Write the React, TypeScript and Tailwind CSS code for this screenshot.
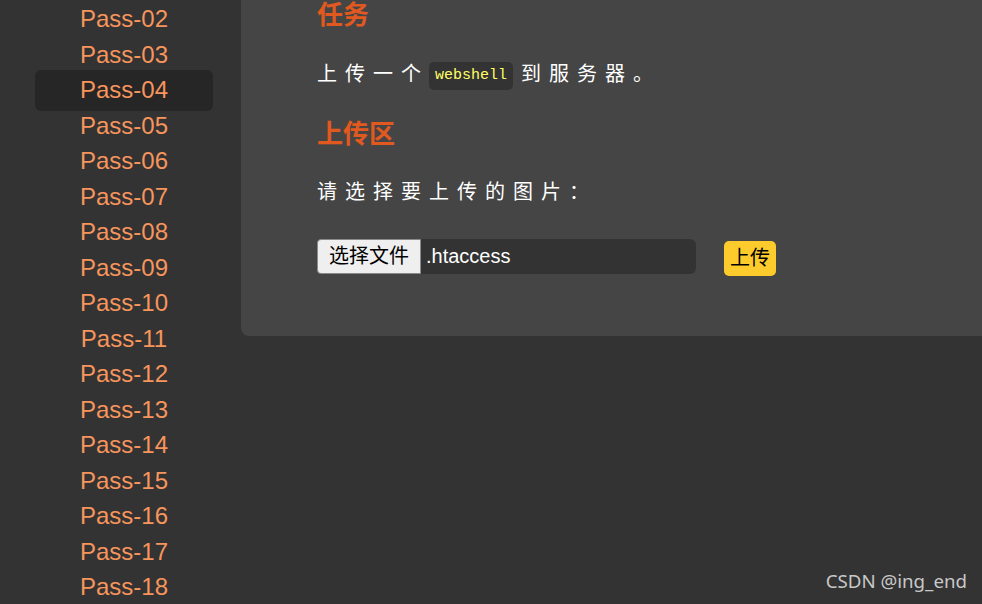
import React from 'react';

const passes = Array.from({ length: 17 }, (_, i) => `Pass-${String(i + 2).padStart(2, '0')}`);

const cjk = "font-['Liberation_Sans','Noto_Sans_CJK_SC',sans-serif]";

export default function App() {
  return (
    <div className="relative flex h-[604px] w-full overflow-hidden bg-[#333333]">
      <aside className="w-[241px] shrink-0 overflow-hidden pl-[35px] pr-[28px]">
        <ul className="flex flex-col pt-[1.5px]">
          {passes.map((name) => (
            <li
              key={name}
              className={`-my-[2.75px] flex h-[41px] items-center justify-center rounded-[6px] font-['Liberation_Sans',Arial,sans-serif] text-[24px] text-[#f7955c] ${
                name === 'Pass-04' ? 'bg-[#262626]' : ''
              }`}
            >
              {name}
            </li>
          ))}
        </ul>
      </aside>

      <main className="min-w-0 flex-1">
        <section className={`rounded-bl-[8px] bg-[#454545] pb-[60.5px] pl-[76px] ${cjk}`}>
          <h2 className="text-[26px] font-bold leading-[31px] text-[#e2591f]">任务</h2>
          <p className="mt-[27px] text-[20px] leading-[32px] tracking-[8px] text-white">
            上传一个
            <code className="mr-[8px] inline-block h-[28px] rounded-[5px] bg-[#333333] px-[6px] align-middle font-['Liberation_Mono',monospace] text-[15px] font-normal leading-[28px] tracking-normal text-[#ffff66]">
              webshell
            </code>
            到服务器。
          </p>

          <h2 className="mt-[28.5px] text-[26px] font-bold leading-[31px] text-[#e2591f]">上传区</h2>
          <p className="mt-[26px] text-[20px] leading-[32px] tracking-[8px] text-white">请选择要上传的图片：</p>

          <form className="mt-[29px] flex items-center">
            <div className="flex h-[35px] w-[379px] items-center rounded-[6px] bg-[#333333]">
              <span className="flex h-full items-center rounded-l-[4px] border border-[#8a8a8a] bg-[#efefef] px-[11px] text-[20px] text-black">
                选择文件
              </span>
              <span className="pl-[5px] font-['Liberation_Sans',Arial,sans-serif] text-[20px] text-white">.htaccess</span>
            </div>
            <button
              type="button"
              className="ml-[28px] mt-[4px] flex h-[35px] items-center rounded-[5px] bg-[#fdcb2c] px-[6px] text-[20px] text-black"
            >
              上传
            </button>
          </form>
        </section>
      </main>

      <div className="absolute bottom-[9px] right-[15px] font-['Noto_Sans',sans-serif] text-[18.7px] text-[#c8c8c8]">
        CSDN @ing_end
      </div>
    </div>
  );
}
